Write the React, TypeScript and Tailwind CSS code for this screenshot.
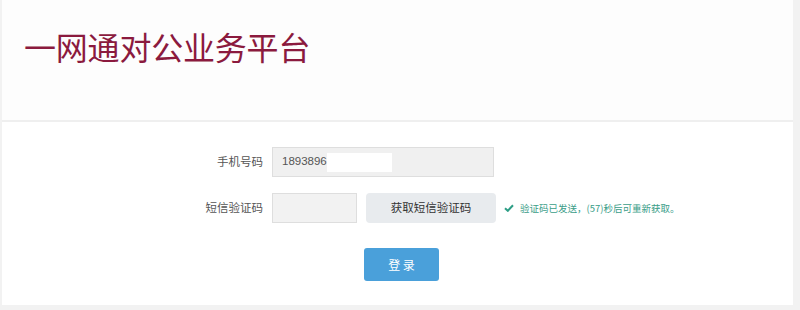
import React from "react";

const font = { fontFamily: '"Microsoft YaHei", "Noto Sans CJK SC", "Noto Sans", sans-serif' };

export default function App() {
  return (
    <div className="w-[800px] h-[310px] bg-[#f2f2f2] pl-[2px] pr-[7px] pb-[5px] overflow-hidden" style={font}>
      <div className="h-[305px] bg-white flex flex-col">
        <div className="h-[122px] border-b-2 border-[#efefef] pl-[22px] pt-[26px] bg-[#fdfdfd]">
          <h1 className="text-[32px] leading-[40px] text-[#8b1a3e] tracking-[-0.2px]">一网通对公业务平台</h1>
        </div>
        <div className="flex flex-col pt-[25px]">
          <div className="flex items-center h-[30px]">
            <div className="w-[261px] text-right text-[11.5px] text-[#555]">手机号码</div>
            <div className="ml-[9px] w-[222px] h-[30px] bg-[#f0f0f0] border border-[#dedede] flex items-center pl-[9px] text-[11.5px] text-[#555]">
              <span style={{ fontFamily: '"Liberation Sans", Arial, sans-serif' }}>1893896</span>
              <span className="w-[65px] h-[19px] bg-white"></span>
            </div>
          </div>
          <div className="flex items-center h-[30px] mt-[16px]">
            <div className="w-[261px] text-right text-[11.5px] text-[#555]">短信验证码</div>
            <div className="ml-[9px] w-[85px] h-[30px] bg-[#f2f2f2] border border-[#dedede]"></div>
            <button className="ml-[9px] w-[130px] h-[30px] bg-[#e8ebee] rounded-[4px] text-[11.5px] text-[#333]">获取短信验证码</button>
            <svg className="ml-[8px]" width="10" height="8" viewBox="0 0 10 8">
              <path d="M1 4.2 L3.8 6.8 L9 1.2" stroke="#2e9e86" strokeWidth="2" fill="none" />
            </svg>
            <span className="ml-[6px] text-[9.5px] text-[#3a9d88]">验证码已发送，(57)秒后可重新获取。</span>
          </div>
          <div className="flex mt-[25px]">
            <button className="ml-[362px] w-[75px] h-[33px] bg-[#4aa0da] rounded-[3px] text-white text-[12px]">登 录</button>
          </div>
        </div>
      </div>
    </div>
  );
}
